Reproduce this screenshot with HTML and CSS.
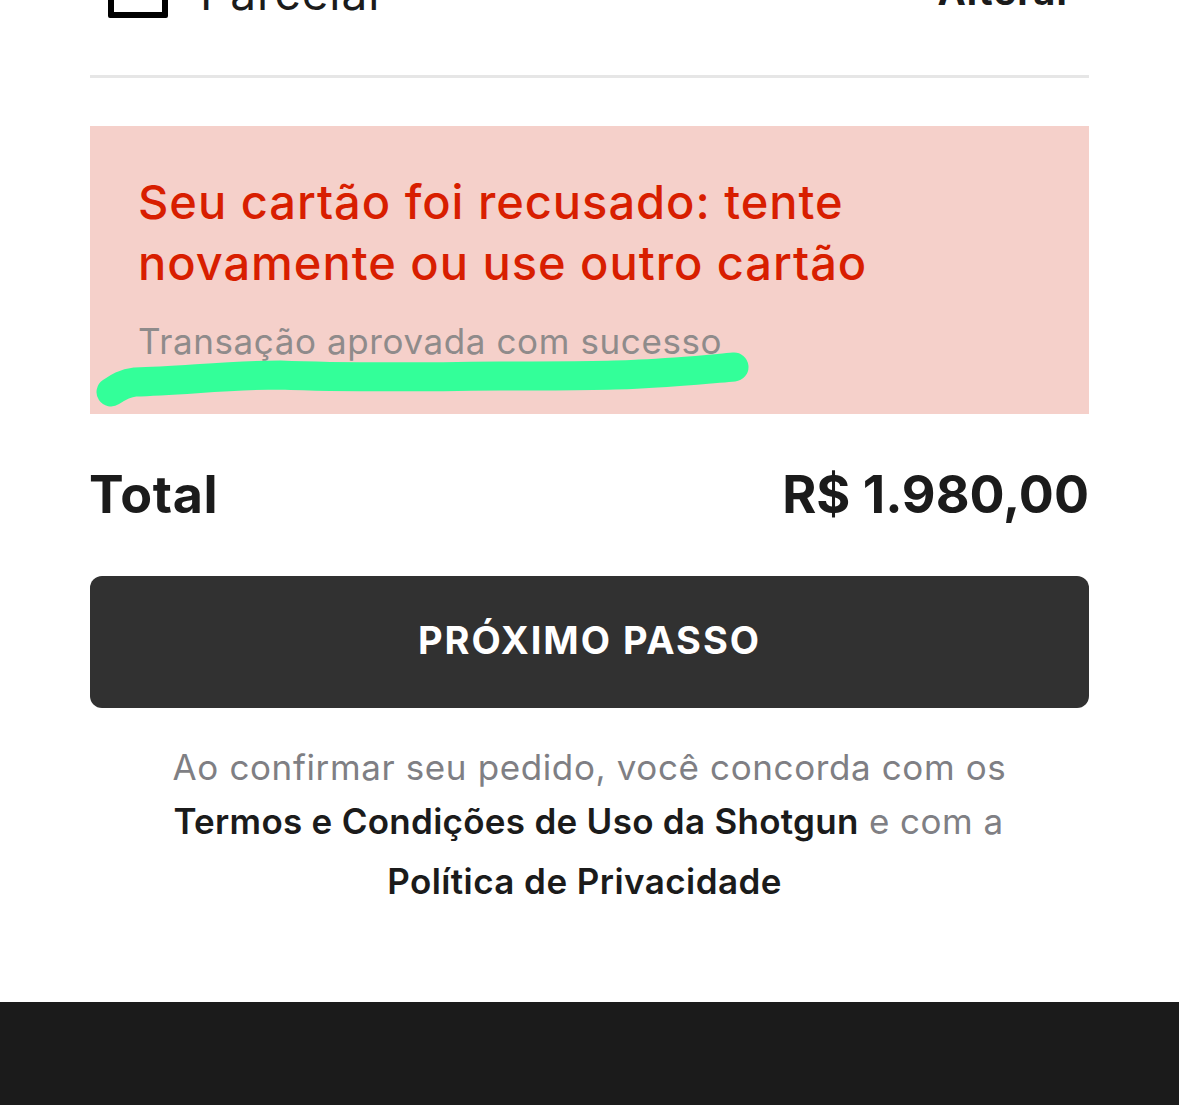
FILE: index.html
```html
<!DOCTYPE html>
<html lang="pt-BR">
<head>
<meta charset="utf-8">
<title>Pagamento</title>
<link rel="stylesheet" href="styles.css">
</head>
<body>
<main class="checkout">
  <section class="method">
    <div class="method-left">
      <span class="method-icon"></span>
      <span class="method-name">Parcelar</span>
    </div>
    <span class="method-change">Alterar</span>
  </section>
  <section class="alert">
    <p class="alert-title">Seu cartão foi recusado: tente novamente ou use outro cartão</p>
    <p class="alert-detail">Transação aprovada com sucesso</p>
    <svg class="marker" viewBox="0 0 670 60" aria-hidden="true">
      <path d="M21 40 C27 36 34 31 45 30 C90 29 140 23 190 23 C260 26 340 25 410 24 C470 24 520 24 550 22 C590 20 620 17 644 15" fill="none" stroke="#33ff99" stroke-width="29" stroke-linecap="round" stroke-linejoin="round"/>
    </svg>
  </section>
  <section class="total">
    <span class="total-label">Total</span>
    <span>R$ 1.980,00</span>
  </section>
  <button class="next">PRÓXIMO PASSO</button>
  <p class="terms">
    <span class="terms-line terms-first">Ao confirmar seu pedido, você concorda com os</span>
    <span class="terms-line terms-second"><b>Termos e Condições de Uso da Shotgun</b> e com a</span>
    <span class="terms-line terms-third"><b>Política de Privacidade</b></span>
  </p>
</main>
<footer class="footer"></footer>
</body>
</html>
```
FILE: styles.css
```css
* { box-sizing: border-box; }
html, body { margin: 0; height: 1105px; overflow: hidden; background: #fff; }
body { font-family: Inter, "Liberation Sans", sans-serif; color: #1b1b1b; display: flex; flex-direction: column; }
.checkout { height: 1002px; padding: 0 90px; overflow: hidden; }
.method { display: flex; justify-content: space-between; align-items: flex-end; margin-top: -40px; height: 118px; padding: 0 16px 59px 18px; border-bottom: 3px solid #e6e6e6; }
.method-left { display: flex; align-items: flex-end; gap: 32px; margin-bottom: -2px; }
.method-icon { width: 60px; height: 50px; border: 6px solid #000; border-radius: 2px; }
.method-name { font-size: 46px; line-height: 50px; letter-spacing: .9px; }
.method-change { font-size: 38px; font-weight: 700; line-height: 50px; letter-spacing: 1.1px; }
.alert { position: relative; margin-top: 48px; height: 288px; padding: 46px 48px 0; background: #f5d0ca; }
.alert-title { margin: 0; font-size: 47px; line-height: 60.5px; font-weight: 500; color: #d81e00; letter-spacing: .98px; max-width: 760px; }
.alert-detail { margin: 26px 0 0; font-size: 35px; line-height: 44px; color: #8f8b8b; letter-spacing: .6px; }
.marker { position: absolute; left: 0; top: 226px; width: 670px; height: 60px; }
.total { display: flex; justify-content: space-between; align-items: center; margin-top: 49px; height: 62px; font-size: 52px; font-weight: 700; }
.total-label { letter-spacing: .6px; margin-left: -1px; }
.next { display: block; width: 100%; height: 132px; margin-top: 51px; padding: 0 0 4px; border: 0; border-radius: 12px; background: #313131; color: #fff; font: 700 38px Inter, sans-serif; letter-spacing: 1.95px; }
.terms { margin: 32px 0 0; text-align: center; font-size: 35px; color: #7f7f84; letter-spacing: .45px; }
.terms-line { display: block; }
.terms-first { line-height: 54px; letter-spacing: .62px; }
.terms-second { line-height: 54px; padding-right: 2px; }
.terms-third { line-height: 66px; padding-right: 10px; }
.terms b { color: #1b1b1b; font-weight: 600; letter-spacing: .28px; }
.terms-third b { letter-spacing: .43px; }
.footer { height: 103px; background: #1b1b1b; }
```
